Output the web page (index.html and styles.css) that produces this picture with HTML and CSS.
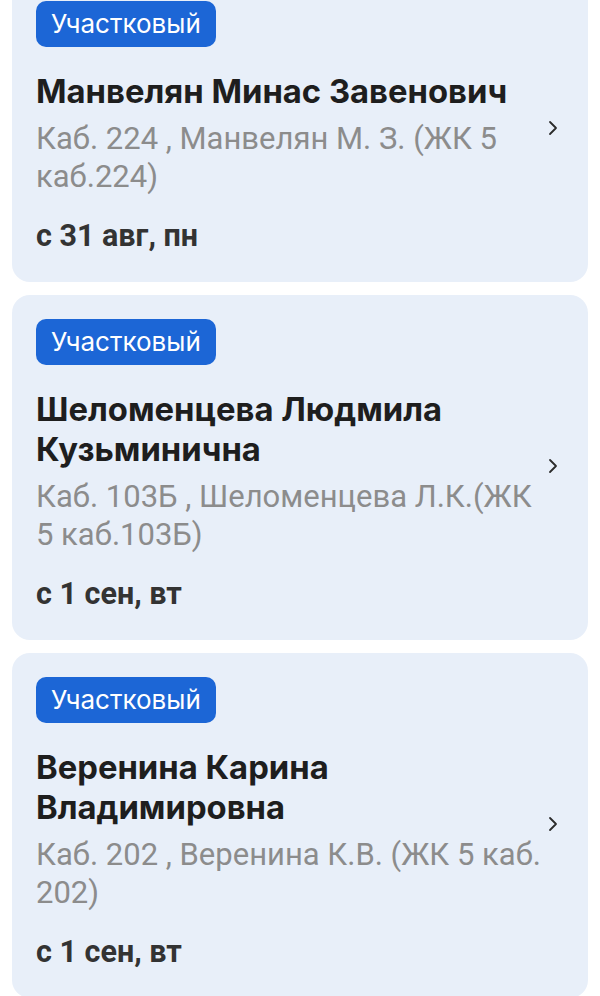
FILE: index.html
```html
<!DOCTYPE html>
<html lang="ru">
<head>
<meta charset="utf-8">
<title>Врачи</title>
<link rel="stylesheet" href="styles.css">
</head>
<body>
<div class="list">
  <div class="card">
    <div class="content">
      <span class="badge">Участковый</span>
      <div class="name">Манвелян Минас Завенович</div>
      <div class="place">Каб. 224 , Манвелян М. З. (ЖК 5 каб.224)</div>
      <div class="date">с 31 авг, пн</div>
    </div>
    <svg class="chev" width="10" height="16" viewBox="0 0 10 16"><path d="M2 2 L8 8 L2 14" fill="none" stroke="#2b2b2b" stroke-width="1.8" stroke-linecap="round" stroke-linejoin="round"/></svg>
  </div>
  <div class="card">
    <div class="content">
      <span class="badge">Участковый</span>
      <div class="name">Шеломенцева Людмила Кузьминична</div>
      <div class="place">Каб. 103Б , Шеломенцева Л.К.(ЖК 5 каб.103Б)</div>
      <div class="date">с 1 сен, вт</div>
    </div>
    <svg class="chev" width="10" height="16" viewBox="0 0 10 16"><path d="M2 2 L8 8 L2 14" fill="none" stroke="#2b2b2b" stroke-width="1.8" stroke-linecap="round" stroke-linejoin="round"/></svg>
  </div>
  <div class="card">
    <div class="content">
      <span class="badge">Участковый</span>
      <div class="name">Веренина Карина Владимировна</div>
      <div class="place">Каб. 202 , Веренина К.В. (ЖК 5 каб. 202)</div>
      <div class="date">с 1 сен, вт</div>
    </div>
    <svg class="chev" width="10" height="16" viewBox="0 0 10 16"><path d="M2 2 L8 8 L2 14" fill="none" stroke="#2b2b2b" stroke-width="1.8" stroke-linecap="round" stroke-linejoin="round"/></svg>
  </div>
</div>
</body>
</html>
```
FILE: styles.css
```css
html, body {
  margin: 0;
  padding: 0;
  background: #ffffff;
  overflow: hidden;
}
body {
  width: 600px;
  height: 996px;
}
.list {
  display: flex;
  flex-direction: column;
  gap: 13px;
  padding: 0 12px;
  margin-top: -23px;
}
.card {
  background: #e8eff9;
  border-radius: 18px;
  padding: 24px 30px 27px 24px;
  display: flex;
  align-items: center;
  gap: 6px;
}
.content {
  flex: 1;
  display: flex;
  flex-direction: column;
  align-items: flex-start;
}
.badge {
  background: #1c66d6;
  color: #ffffff;
  font-family: Inter, "Noto Sans", sans-serif;
  font-size: 26px;
  line-height: 46px;
  height: 46px;
  padding: 0 15px;
  border-radius: 10px;
}
.name {
  font-family: Inter, "Noto Sans", sans-serif;
  font-weight: 700;
  font-size: 32.8px;
  line-height: 40px;
  color: #1e1e1e;
  margin-top: 24px;
}
.place {
  font-family: Roboto, "Liberation Sans", sans-serif;
  font-size: 31px;
  line-height: 38px;
  color: #8c8c8c;
  margin-top: 9px;
}
.date {
  font-family: Roboto, "Liberation Sans", sans-serif;
  font-weight: 700;
  font-size: 30.5px;
  line-height: 38px;
  color: #333333;
  margin-top: 21px;
}
.chev {
  flex: none;
}
```
